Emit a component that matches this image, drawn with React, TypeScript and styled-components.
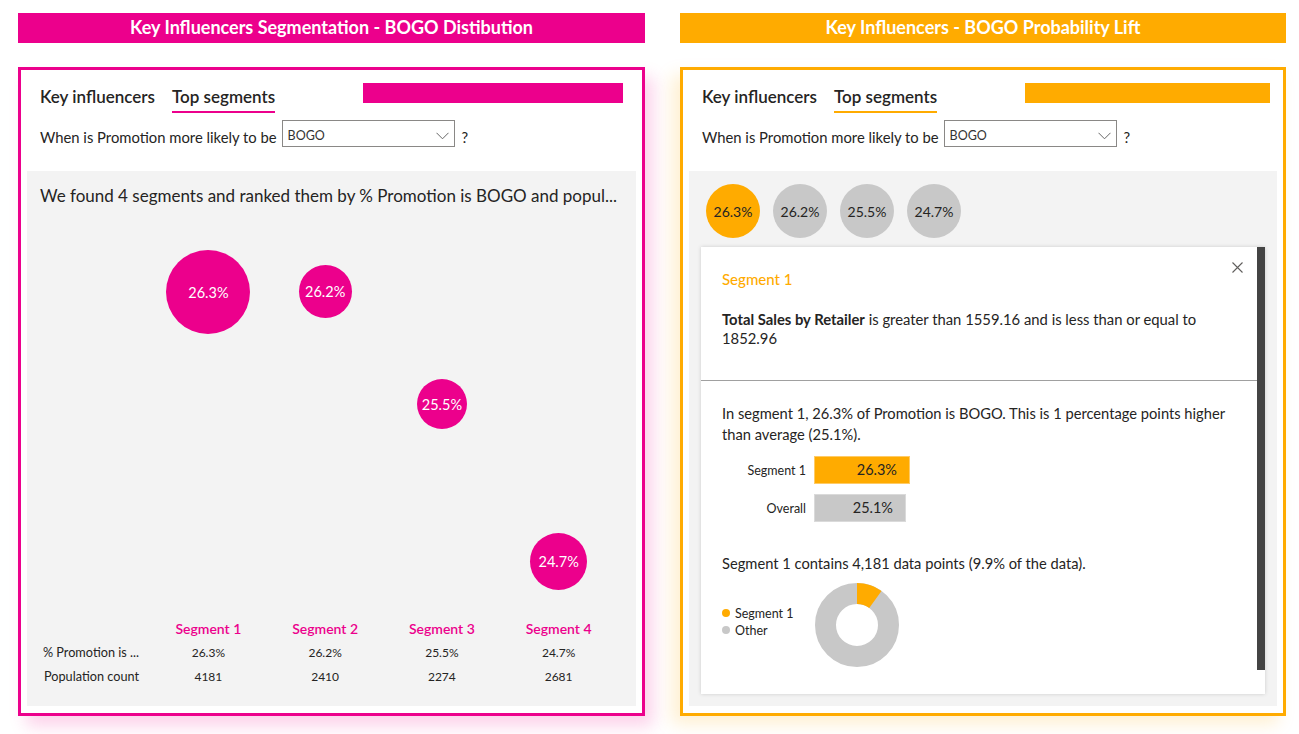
import React from 'react';
import styled, { createGlobalStyle } from 'styled-components';

const PINK = '#EC008C';
const ORANGE = '#FFAB00';
const INK = '#252423';
const PANEL_BG = '#F3F3F3';
const SOFT_GRAY = '#C8C8C8';

const GlobalStyle = createGlobalStyle`
  html, body { margin: 0; padding: 0; background: #ffffff; }
  body { font-family: Lato, 'Open Sans', sans-serif; color: ${INK}; }
  * { box-sizing: border-box; }
`;

const Page = styled.div`
  display: grid;
  grid-template-columns: 627px 606px;
  column-gap: 35px;
  padding: 13px 0 0 18px;
  width: 1299px;
  height: 734px;
  overflow: hidden;
`;

const Column = styled.section`
  display: flex;
  flex-direction: column;
  gap: 24px;
`;

const TitleBar = styled.h2<{ $color: string }>`
  margin: 0;
  height: 30px;
  background: ${(p) => p.$color};
  color: #ffffff;
  font-size: 18px;
  font-weight: 700;
  line-height: 28px;
  text-align: center;
`;

const Card = styled.div<{ $color: string; $shadow: string }>`
  height: 649px;
  border: 3px solid ${(p) => p.$color};
  background: #ffffff;
  box-shadow: ${(p) => p.$shadow};
  display: flex;
  flex-direction: column;
  padding: 0 6px 7px 6px;
`;

const Head = styled.div`
  padding: 15px 13px 0 13px;
`;

const TabRow = styled.div`
  display: flex;
  align-items: flex-start;
  gap: 17px;
`;

const Tab = styled.div<{ $active?: boolean; $color: string }>`
  font-size: 17px;
  font-weight: 600;
  line-height: 24px;
  padding-bottom: 2px;
  border-bottom: 2px solid ${(p) => (p.$active ? p.$color : 'transparent')};
`;

const Redaction = styled.div<{ $color: string; $w: number; $mr: number }>`
  margin-left: auto;
  margin-right: ${(p) => p.$mr}px;
  margin-top: -2px;
  width: ${(p) => p.$w}px;
  height: 20px;
  background: ${(p) => p.$color};
`;

const PromptRow = styled.div`
  margin-top: 7px;
  height: 27px;
  display: flex;
  align-items: center;
  font-size: 14.8px;
`;

const PromptText = styled.span`
  padding-top: 7px;
`;

const Select = styled.div`
  width: 173px;
  height: 27px;
  margin-left: 5px;
  border: 1px solid #8a8886;
  display: flex;
  align-items: center;
  justify-content: space-between;
  padding: 4px 5px 0 5px;
  font-size: 12.5px;
  color: #333333;
`;

const Question = styled.span`
  margin-left: 7px;
  padding-top: 7px;
`;

const Body = styled.div<{ $pad: string }>`
  flex: 1;
  margin-top: 24px;
  background: ${PANEL_BG};
  display: flex;
  flex-direction: column;
  padding: ${(p) => p.$pad};
  min-height: 0;
`;

const Summary = styled.div`
  font-size: 17px;
  line-height: 24px;
  white-space: nowrap;
`;

const Chart = styled.div`
  flex: 1;
  display: grid;
  grid-template-columns: 110px repeat(4, 1fr);
  align-items: start;
`;

const Bubble = styled.div<{ $size: number; $top: number; $col: number }>`
  grid-column: ${(p) => p.$col};
  grid-row: 1;
  justify-self: center;
  margin-top: ${(p) => p.$top}px;
  width: ${(p) => p.$size}px;
  height: ${(p) => p.$size}px;
  border-radius: 50%;
  background: ${PINK};
  color: #ffffff;
  font-size: 14.5px;
  display: flex;
  align-items: center;
  justify-content: center;
`;

const Table = styled.div`
  display: grid;
  grid-template-columns: 110px repeat(4, 1fr);
  grid-auto-rows: 24px;
  align-items: center;
`;

const SegHead = styled.div`
  text-align: center;
  color: ${PINK};
  font-size: 14px;
  font-weight: 600;
`;

const RowLabel = styled.div`
  font-size: 12.7px;
  text-align: right;
  padding-right: 11px;
  white-space: nowrap;
`;

const Cell = styled.div`
  font-size: 12px;
  text-align: center;
`;

const PillRow = styled.div`
  display: flex;
  gap: 13px;
  padding-left: 5px;
`;

const Pill = styled.div<{ $active?: boolean }>`
  width: 54px;
  height: 54px;
  border-radius: 50%;
  background: ${(p) => (p.$active ? ORANGE : SOFT_GRAY)};
  color: ${INK};
  font-size: 14px;
  display: flex;
  align-items: center;
  justify-content: center;
`;

const Panel = styled.div`
  margin-top: 9px;
  flex: 1;
  display: flex;
  align-items: flex-start;
  background: #ffffff;
  box-shadow: 0 0 4px rgba(0, 0, 0, 0.16);
`;

const PanelMain = styled.div`
  flex: 1;
  display: flex;
  flex-direction: column;
`;

const PanelSection = styled.div<{ $pad: string }>`
  padding: ${(p) => p.$pad};
`;

const PanelHeader = styled.div`
  display: flex;
  justify-content: space-between;
  align-items: flex-start;
`;

const SegTitle = styled.div`
  margin-top: 22px;
  color: ${ORANGE};
  font-size: 15px;
  font-weight: 500;
  line-height: 20px;
`;

const Close = styled.button`
  margin-top: 15px;
  width: 11px;
  height: 11px;
  padding: 0;
  border: 0;
  background: none;
  display: flex;
`;

const Desc = styled.p`
  margin: 21px 0 0 0;
  max-width: 500px;
  font-size: 14.8px;
  line-height: 19px;
`;

const Strong = styled.strong`
  font-weight: 700;
`;

const Bound = styled.span`
  white-space: nowrap;
`;

const Divider = styled.hr`
  margin: 0;
  border: 0;
  height: 1px;
  background: #a0a0a0;
`;

const Para = styled.p<{ $mt?: number; $lh: number }>`
  margin: ${(p) => p.$mt ?? 0}px 0 0 0;
  max-width: 515px;
  font-size: 14.7px;
  line-height: ${(p) => p.$lh}px;
`;

const Bars = styled.div`
  margin-top: 11px;
  display: grid;
  grid-template-columns: 84px auto;
  column-gap: 8px;
  row-gap: 10px;
  align-items: center;
  justify-content: start;
`;

const BarLabel = styled.div`
  font-size: 12.5px;
  text-align: right;
`;

const Bar = styled.div<{ $color: string; $edge: string; $w: number }>`
  width: ${(p) => p.$w}px;
  height: 28px;
  background: ${(p) => p.$color};
  border: 1px solid ${(p) => p.$edge};
  text-align: right;
  padding-right: 12px;
  font-size: 14.5px;
  line-height: 26px;
  color: ${INK};
`;

const DonutRow = styled.div`
  margin-top: 10px;
  display: flex;
  align-items: center;
`;

const Legend = styled.div`
  width: 93px;
  margin-top: -7px;
  font-size: 12.5px;
  line-height: 17px;
`;

const LegendItem = styled.div`
  display: flex;
  align-items: center;
  gap: 5px;
`;

const Dot = styled.span<{ $color: string }>`
  width: 8px;
  height: 8px;
  border-radius: 50%;
  background: ${(p) => p.$color};
`;

const ScrollThumb = styled.div`
  width: 8px;
  height: 423px;
  flex-shrink: 0;
  background: #444444;
`;

const Chevron = () => (
  <svg width="13" height="8" viewBox="0 0 13 8">
    <polyline points="0.5,0.8 6.5,6.8 12.5,0.8" fill="none" stroke="#666" strokeWidth="1" />
  </svg>
);

const CloseIcon = () => (
  <svg width="11" height="11" viewBox="0 0 11 11">
    <path d="M0.5 0.5 L10.5 10.5 M10.5 0.5 L0.5 10.5" stroke="#605E5C" strokeWidth="1.1" fill="none" />
  </svg>
);

const Donut = ({ share }: { share: number }) => {
  const r = 31.5;
  const c = 2 * Math.PI * r;
  return (
    <svg width="84" height="84" viewBox="0 0 84 84">
      <circle cx="42" cy="42" r={r} fill="none" stroke={SOFT_GRAY} strokeWidth="21" />
      <circle
        cx="42"
        cy="42"
        r={r}
        fill="none"
        stroke={ORANGE}
        strokeWidth="21"
        strokeDasharray={`${share * c} ${c}`}
        transform="rotate(-90 42 42)"
      />
    </svg>
  );
};

const segments = [
  { name: 'Segment 1', pct: '26.3%', count: '4181', size: 84, top: 42 },
  { name: 'Segment 2', pct: '26.2%', count: '2410', size: 53, top: 57 },
  { name: 'Segment 3', pct: '25.5%', count: '2274', size: 50, top: 171 },
  { name: 'Segment 4', pct: '24.7%', count: '2681', size: 57, top: 325 },
];

const CardHead = ({ color, rectW, rectMr }: { color: string; rectW: number; rectMr: number }) => (
  <Head>
    <TabRow>
      <Tab $color={color}>Key influencers</Tab>
      <Tab $color={color} $active>
        Top segments
      </Tab>
      <Redaction $color={color} $w={rectW} $mr={rectMr} />
    </TabRow>
    <PromptRow>
      <PromptText>When is Promotion more likely to be</PromptText>
      <Select>
        BOGO
        <Chevron />
      </Select>
      <Question>?</Question>
    </PromptRow>
  </Head>
);

export default function App() {
  return (
    <>
      <GlobalStyle />
      <Page>
        <Column>
          <TitleBar $color={PINK}>Key Influencers Segmentation - BOGO Distibution</TitleBar>
          <Card $color={PINK} $shadow="8px 10px 16px rgba(236, 0, 140, 0.18)">
            <CardHead color={PINK} rectW={260} rectMr={0} />
            <Body $pad="13px 19px 18px 13px">
              <Summary>We found 4 segments and ranked them by % Promotion is BOGO and popul...</Summary>
              <Chart>
                {segments.map((s, i) => (
                  <Bubble key={s.name} $col={i + 2} $size={s.size} $top={s.top}>
                    {s.pct}
                  </Bubble>
                ))}
              </Chart>
              <Table>
                <span />
                {segments.map((s) => (
                  <SegHead key={s.name}>{s.name}</SegHead>
                ))}
                <RowLabel>% Promotion is ...</RowLabel>
                {segments.map((s) => (
                  <Cell key={s.name}>{s.pct}</Cell>
                ))}
                <RowLabel>Population count</RowLabel>
                {segments.map((s) => (
                  <Cell key={s.name}>{s.count}</Cell>
                ))}
              </Table>
            </Body>
          </Card>
        </Column>
        <Column>
          <TitleBar $color={ORANGE}>Key Influencers - BOGO Probability Lift</TitleBar>
          <Card $color={ORANGE} $shadow="-8px 8px 16px rgba(255, 171, 0, 0.18)">
            <CardHead color={ORANGE} rectW={245} rectMr={-6} />
            <Body $pad="13px 12px 12px 12px">
              <PillRow>
                {segments.map((s, i) => (
                  <Pill key={s.name} $active={i === 0}>
                    {s.pct}
                  </Pill>
                ))}
              </PillRow>
              <Panel>
                <PanelMain>
                  <PanelSection $pad="0 14px 32px 21px">
                    <PanelHeader>
                      <SegTitle>Segment 1</SegTitle>
                      <Close aria-label="Close">
                        <CloseIcon />
                      </Close>
                    </PanelHeader>
                    <Desc>
                      <Strong>Total Sales by Retailer</Strong>{' '}
                      <Bound>is greater than 1559.16 and is less than or equal to</Bound> <Bound>1852.96</Bound>
                    </Desc>
                  </PanelSection>
                  <Divider />
                  <PanelSection $pad="22px 14px 26px 21px">
                    <Para $lh={21}>
                      In segment 1, 26.3% of Promotion is BOGO. This is 1 percentage points higher than average (25.1%).
                    </Para>
                    <Bars>
                      <BarLabel>Segment 1</BarLabel>
                      <Bar $color={ORANGE} $edge="#ffcb66" $w={96}>
                        26.3%
                      </Bar>
                      <BarLabel>Overall</BarLabel>
                      <Bar $color={SOFT_GRAY} $edge="#dadada" $w={92}>
                        25.1%
                      </Bar>
                    </Bars>
                    <Para $mt={31} $lh={20}>
                      Segment 1 contains 4,181 data points (9.9% of the data).
                    </Para>
                    <DonutRow>
                      <Legend>
                        <LegendItem>
                          <Dot $color={ORANGE} />
                          Segment 1
                        </LegendItem>
                        <LegendItem>
                          <Dot $color={SOFT_GRAY} />
                          Other
                        </LegendItem>
                      </Legend>
                      <Donut share={0.099} />
                    </DonutRow>
                  </PanelSection>
                </PanelMain>
                <ScrollThumb />
              </Panel>
            </Body>
          </Card>
        </Column>
      </Page>
    </>
  );
}
